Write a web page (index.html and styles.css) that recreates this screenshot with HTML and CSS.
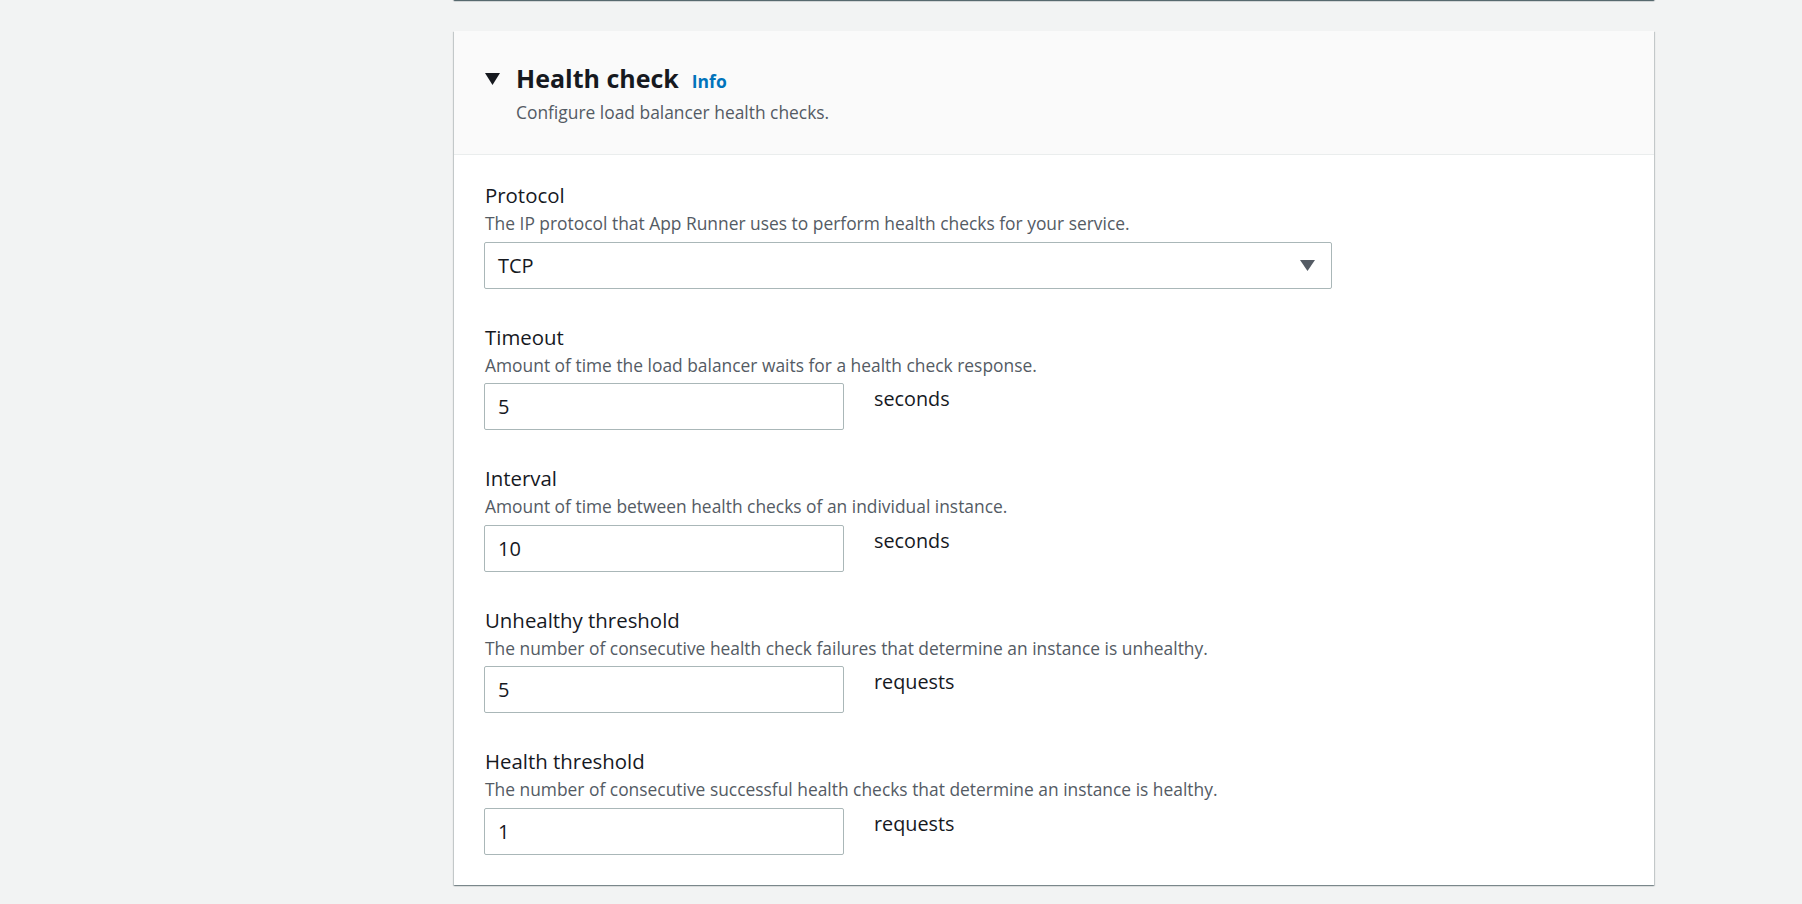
FILE: index.html
```html
<!DOCTYPE html>
<html lang="en">
<head>
<meta charset="utf-8">
<title>Health check</title>
<link rel="stylesheet" href="styles.css">
</head>
<body>
<div class="layout">
  <div class="content">
    <div class="prev-card"></div>
    <section class="card">
      <header class="card-header">
        <div class="title-row">
          <svg class="caret" width="15" height="12" viewBox="0 0 15 12" aria-hidden="true"><polygon points="0,0 15,0 7.5,12" fill="#16191f"/></svg>
          <h2 class="title">Health check</h2>
          <a class="info" href="#">Info</a>
        </div>
        <p class="header-desc">Configure load balancer health checks.</p>
      </header>
      <div class="card-body">
        <div class="field">
          <div class="label">Protocol</div>
          <div class="desc">The IP protocol that App Runner uses to perform health checks for your service.</div>
          <div class="select">
            <span class="select-value">TCP</span>
            <svg class="select-arrow" width="15" height="11" viewBox="0 0 15 11" aria-hidden="true"><polygon points="0,0 15,0 7.5,11" fill="#545b64"/></svg>
          </div>
        </div>
        <div class="field">
          <div class="label">Timeout</div>
          <div class="desc">Amount of time the load balancer waits for a health check response.</div>
          <div class="control-row">
            <div class="input">5</div>
            <span class="unit">seconds</span>
          </div>
        </div>
        <div class="field">
          <div class="label">Interval</div>
          <div class="desc">Amount of time between health checks of an individual instance.</div>
          <div class="control-row">
            <div class="input">10</div>
            <span class="unit">seconds</span>
          </div>
        </div>
        <div class="field">
          <div class="label">Unhealthy threshold</div>
          <div class="desc">The number of consecutive health check failures that determine an instance is unhealthy.</div>
          <div class="control-row">
            <div class="input">5</div>
            <span class="unit">requests</span>
          </div>
        </div>
        <div class="field">
          <div class="label">Health threshold</div>
          <div class="desc">The number of consecutive successful health checks that determine an instance is healthy.</div>
          <div class="control-row">
            <div class="input">1</div>
            <span class="unit">requests</span>
          </div>
        </div>
      </div>
    </section>
  </div>
</div>
</body>
</html>
```
FILE: styles.css
```css
html, body {
  margin: 0;
  padding: 0;
}
body {
  background: #f2f3f3;
  font-family: "Open Sans", "Noto Sans", sans-serif;
  color: #16191f;
  height: 904px;
  overflow: hidden;
}
.layout {
  display: flex;
  padding-left: 454px;
}
.content {
  width: 1200px;
  display: flex;
  flex-direction: column;
}
.prev-card {
  height: 20px;
  margin-top: -20px;
  background: #ffffff;
  box-shadow: 0 1px 1px 0 rgba(0, 28, 36, 0.5), 1px 1px 1px 0 rgba(0, 28, 36, 0.15), -1px 1px 1px 0 rgba(0, 28, 36, 0.15);
}
.card {
  margin-top: 31px;
  background: #ffffff;
  box-shadow: 0 1px 1px 0 rgba(0, 28, 36, 0.3), 1px 1px 1px 0 rgba(0, 28, 36, 0.15), -1px 1px 1px 0 rgba(0, 28, 36, 0.15);
}
.card-header {
  background: #fafafa;
  border-bottom: 1px solid #eaeded;
  padding: 30px 30px 29px 31px;
}
.title-row {
  display: flex;
  align-items: baseline;
}
.caret {
  flex: none;
  margin-right: 16px;
  align-self: center;
  position: relative;
  top: 1px;
}
.title {
  margin: 0;
  font-size: 25px;
  line-height: 34px;
  font-weight: 700;
  color: #16191f;
}
.info {
  margin-left: 13px;
  font-size: 17.5px;
  font-weight: 700;
  color: #0073bb;
  text-decoration: none;
}
.header-desc {
  margin: 4px 0 0 31px;
  font-size: 17.4px;
  line-height: 26px;
  color: #545b64;
}
.card-body {
  padding: 26.3px 30px 30px 30px;
  display: flex;
  flex-direction: column;
  gap: 34px;
}
.field {
  display: flex;
  flex-direction: column;
}
.label {
  font-size: 20.4px;
  line-height: 28px;
  color: #16191f;
  padding-left: 1px;
}
.desc {
  margin-top: 3px;
  font-size: 17.4px;
  line-height: 22px;
  color: #545b64;
  padding-left: 1px;
}
.select {
  margin-top: 7.5px;
  width: 848px;
  height: 47px;
  box-sizing: border-box;
  border: 1px solid #aab7b8;
  border-radius: 2px;
  display: flex;
  align-items: center;
  justify-content: space-between;
  padding: 0 16px 0 13px;
  font-size: 20px;
}
.select-arrow {
  flex: none;
}
.control-row {
  margin-top: 7.5px;
  display: flex;
  align-items: flex-start;
}
.input {
  width: 360px;
  height: 47px;
  box-sizing: border-box;
  border: 1px solid #aab7b8;
  border-radius: 2px;
  display: flex;
  align-items: center;
  padding: 0 13px;
  font-size: 20px;
  color: #16191f;
}
.unit {
  margin-left: 30px;
  margin-top: 2px;
  font-size: 19.8px;
  line-height: 28px;
  color: #16191f;
}
```
